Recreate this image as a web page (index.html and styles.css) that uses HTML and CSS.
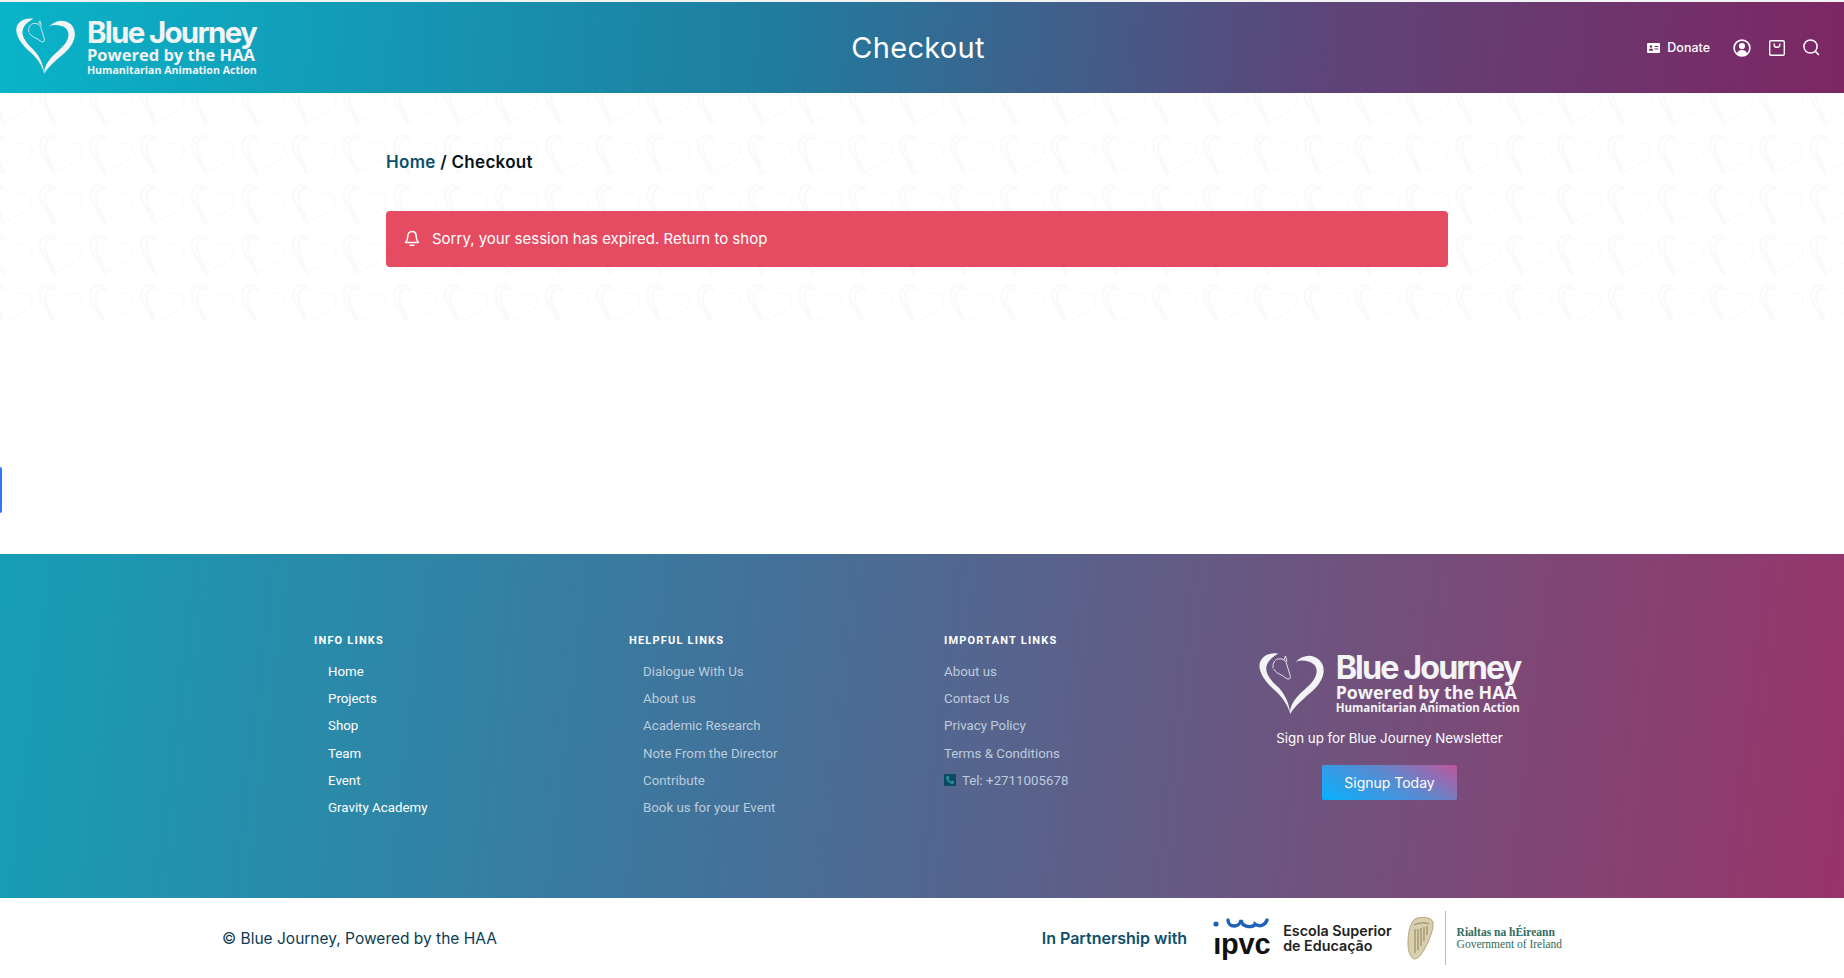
FILE: index.html
```html
<!doctype html>
<html lang="en">
 <head>
  <meta charset="UTF-8">
  <meta name="viewport" content="width=device-width, initial-scale=1.0">
  <title>Checkout - Blue Journey</title>
  <link rel="stylesheet" href="styles.css">
 </head>
 <body>
  <svg class="defs" width="0" height="0" aria-hidden="true">
   <defs>
    <symbol id="heart" viewBox="0 0 177 167">
     <path fill="currentColor" d="M100 24C114 10 135 4 150 10C170 17 179 35 176 55C172 85 145 105 122 125C106 139 93 152 85 167C83 150 92 134 106 118C124 98 152 82 157 55C160 38 149 26 134 23C122 20 110 20 100 24Z"/>
     <path fill="currentColor" d="M52 2C30 -3 5 8 1 30C-2 55 20 82 45 104C62 120 78 140 85 167C82 135 68 108 48 90C28 72 16 52 20 36C24 20 38 10 52 2Z"/>
     <path fill="none" stroke="currentColor" stroke-width="2.4" d="M38 42C36 28 44 16 54 16C62 15 70 18 74 26L85 62Q87 73 77 71L64 62C54 58 44 52 40 44M68 18L72 8L76 24"/>
    </symbol>
    <pattern id="hearts" x="37" y="-10" width="50.6" height="50" patternUnits="userSpaceOnUse">
     <path fill="none" stroke="#f8fafc" stroke-width="2.5" d="M3 12C3 2 14 0 18 6C14 4 8 7 8 14C8 24 16 30 17 40C18 44 14 36 10 28C6 22 3 18 3 12Z"/>
     <path fill="none" stroke="#f9fbfc" stroke-width="1.5" d="M17 40C28 33 46 28 46 18C46 10 36 8 28 12"/>
    </pattern>
   </defs>
  </svg>

  <header class="site-header">
   <a class="logo" href="#">
    <svg class="logo-heart"><use href="#heart"/></svg>
    <span class="logo-text">
     <span class="logo-name">Blue Journey</span>
     <span class="logo-sub">Powered by the HAA</span>
     <span class="logo-small">Humanitarian Animation Action</span>
    </span>
   </a>
   <h1 class="page-title">Checkout</h1>
   <nav class="header-nav">
    <a class="donate" href="#">
     <svg width="13" height="10" viewBox="0 0 13 10">
      <path fill="#fff" fill-rule="evenodd" d="M1 0H12Q13 0 13 1V9Q13 10 12 10H1Q0 10 0 9V1Q0 0 1 0ZM4 2.2A1.3 1.3 0 1 0 4 4.8A1.3 1.3 0 1 0 4 2.2ZM1.8 7.8H6.2C6.2 6.2 5.2 5.4 4 5.4C2.8 5.4 1.8 6.2 1.8 7.8ZM7.5 3V4H11.3V3ZM7.5 5.5V6.5H11.3V5.5Z"/>
     </svg>
     Donate
    </a>
    <a class="nav-icon" href="#">
     <svg width="18" height="18" viewBox="0 0 18 18">
      <circle cx="9" cy="9" r="7.9" fill="none" stroke="#fff" stroke-width="1.6"/>
      <path fill="#fff" d="M9 4A2.9 2.9 0 0 1 9 10.2A2.9 2.9 0 0 1 9 4ZM3.9 14.6C4.6 12 6.6 11 9 11C11.4 11 13.4 12 14.1 14.6C12.8 15.9 11 16.6 9 16.6C7 16.6 5.2 15.9 3.9 14.6Z"/>
     </svg>
    </a>
    <a class="nav-icon" href="#">
     <svg width="16" height="16" viewBox="0 0 16 16" fill="none" stroke="#fff" stroke-width="1.4">
      <rect x="0.7" y="0.7" width="14.6" height="14.6" rx="1.2"/>
      <path d="M5.2 3.5V5.2C5.2 8 10.8 8 10.8 5.2V3.5"/>
     </svg>
    </a>
    <a class="nav-icon" href="#">
     <svg width="17" height="17" viewBox="0 0 17 17" fill="none" stroke="#fff" stroke-width="1.5">
      <circle cx="7.5" cy="7.5" r="6.6"/>
      <path d="M12.4 12.4L16 16"/>
     </svg>
    </a>
   </nav>
  </header>

  <main class="page-main">
   <svg class="main-pattern" aria-hidden="true"><rect width="100%" height="100%" fill="url(#hearts)"/></svg>
   <div class="main-inner">
    <p class="breadcrumb"><a href="#">Home</a> / Checkout</p>
    <div class="alert">
     <svg width="16" height="17" viewBox="0 0 16 17" fill="none" stroke="#fff" stroke-width="1.5">
      <path d="M8 1.5C5.2 1.5 3.8 3.6 3.8 6.2C3.8 9.5 3 11 1.5 12.6H14.5C13 11 12.2 9.5 12.2 6.2C12.2 3.6 10.8 1.5 8 1.5Z" stroke-linejoin="round"/>
      <path d="M6.2 15.2H9.8" stroke-linecap="round"/>
     </svg>
     <span>Sorry, your session has expired. Return to shop</span>
    </div>
   </div>
  </main>
  <a class="side-tab" href="#" aria-label="Open panel"></a>

  <footer class="site-footer">
   <div class="footer-grid">
    <div class="footer-col col-info">
     <h4>Info Links</h4>
     <ul>
      <li><a href="#">Home</a></li>
      <li><a href="#">Projects</a></li>
      <li><a href="#">Shop</a></li>
      <li><a href="#">Team</a></li>
      <li><a href="#">Event</a></li>
      <li><a href="#">Gravity Academy</a></li>
     </ul>
    </div>
    <div class="footer-col col-helpful">
     <h4>Helpful Links</h4>
     <ul>
      <li><a href="#">Dialogue With Us</a></li>
      <li><a href="#">About us</a></li>
      <li><a href="#">Academic Research</a></li>
      <li><a href="#">Note From the Director</a></li>
      <li><a href="#">Contribute</a></li>
      <li><a href="#">Book us for your Event</a></li>
     </ul>
    </div>
    <div class="footer-col col-important">
     <h4>Important Links</h4>
     <ul>
      <li><a href="#">About us</a></li>
      <li><a href="#">Contact Us</a></li>
      <li><a href="#">Privacy Policy</a></li>
      <li><a href="#">Terms &amp; Conditions</a></li>
      <li class="tel">
       <svg width="12" height="12" viewBox="0 0 12 12">
        <rect width="12" height="12" rx="1" fill="#0b4a5e"/>
        <path fill="#2d8fa8" d="M3 2.2L4.6 2L5.4 4L4.5 4.9C5 6.1 5.9 7 7.1 7.5L8 6.6L10 7.4L9.8 9C9.7 9.6 9.2 10 8.6 9.9C5.6 9.5 2.5 6.4 2.1 3.4C2 2.8 2.4 2.3 3 2.2Z"/>
       </svg>
       <a href="#">Tel: +2711005678</a>
      </li>
     </ul>
    </div>
    <div class="footer-signup">
     <a class="logo logo-footer" href="#">
      <svg class="logo-heart"><use href="#heart"/></svg>
      <span class="logo-text">
       <span class="logo-name">Blue Journey</span>
       <span class="logo-sub">Powered by the HAA</span>
       <span class="logo-small">Humanitarian Animation Action</span>
      </span>
     </a>
     <p class="signup-text">Sign up for Blue Journey Newsletter</p>
     <a class="signup-btn" href="#">Signup Today</a>
    </div>
   </div>
  </footer>

  <div class="bottom-bar">
   <p class="copyright">© Blue Journey, Powered by the HAA</p>
   <div class="partners">
    <span class="partner-label">In Partnership with</span>
    <div class="ipvc">
     <svg width="56" height="12" viewBox="0 0 56 12">
      <circle cx="3" cy="6" r="2.6" fill="#1c63b7"/>
      <path fill="none" stroke="#1c63b7" stroke-width="3.4" stroke-linecap="round" d="M15 2C15 10 27 10 28 2C29 10 41 10 42 6C46 9 52 8 54 2"/>
     </svg>
     <span class="ipvc-name">ıpvc</span>
    </div>
    <p class="escola">Escola Superior<br>de Educação</p>
    <svg class="harp" width="27" height="43" viewBox="0 0 27 43">
     <path fill="#d8ceb0" stroke="#b3a679" stroke-width="1" d="M8 2C14 -1 24 0 26 5C27 12 22 24 17 33C14 38 11 42 7 42C3 40 1 34 1 26C1 16 3 6 8 2Z"/>
     <path fill="none" stroke="#8f8253" stroke-width="1" d="M7 8C11 6 18 5 22 7M8 12V36M11 12V33M14 11V29M17 10V24M20 9V18"/>
    </svg>
    <span class="partner-rule"></span>
    <p class="gov"><b>Rialtas na hÉireann</b><br>Government of Ireland</p>
   </div>
  </div>
 </body>
</html>
```

FILE: styles.css
```css
* {
  box-sizing: border-box;
}
html,
body {
  margin: 0;
  background-color: #fff;
}
body {
  font-family: Inter, "Open Sans", sans-serif;
  color: #0b3c52;
  overflow-x: hidden;
}
a {
  color: inherit;
  text-decoration: none;
}
.defs {
  position: absolute;
}

/* header */
.site-header {
  display: grid;
  grid-template-columns: 1fr auto 1fr;
  align-items: center;
  height: 93px;
  padding: 0 24px 0 16px;
  border-top: 2px solid #f0f2f3;
  background: linear-gradient(95deg, #09b4c9 0%, #207c9f 42%, #5e4478 72%, #7d2763 100%);
  color: #fff;
}
.page-title {
  margin: 0;
  font-size: 29px;
  font-weight: 400;
  letter-spacing: 0.3px;
}
.logo {
  display: flex;
  align-items: flex-start;
  gap: 12px;
  color: #f3f4f5;
}
.logo-heart {
  width: 59px;
  height: 56px;
  flex: none;
}
.logo-text {
  display: flex;
  flex-direction: column;
  margin-top: -1px;
  font-family: "Open Sans", sans-serif;
  font-weight: 700;
  white-space: nowrap;
}
.logo-name {
  font-family: Inter, sans-serif;
  font-size: 29.5px;
  line-height: 30px;
  letter-spacing: -1.7px;
}
.logo-sub {
  font-size: 16.5px;
  line-height: 16px;
}
.logo-small {
  font-size: 10.6px;
  line-height: 14px;
}
.header-nav {
  display: flex;
  justify-content: flex-end;
  align-items: center;
  gap: 18px;
}
.donate {
  display: flex;
  align-items: center;
  gap: 7px;
  margin-right: 5px;
  font-size: 12.5px;
  font-weight: 500;
}
.nav-icon {
  display: flex;
}

/* main */
.page-main {
  position: relative;
  height: 461px;
  padding: 0 10px 0 0;
}
.main-pattern {
  position: absolute;
  top: 0;
  left: 0;
  width: 100%;
  height: 227px;
}
.main-inner {
  position: relative;
  width: 1062px;
  margin: 0 auto;
  padding-top: 59px;
}
.breadcrumb {
  margin: 0 0 39px;
  font-size: 17px;
  line-height: 20px;
  font-weight: 600;
  letter-spacing: 0.3px;
  color: #05141b;
}
.breadcrumb a {
  color: #0b4f6c;
}
.alert {
  display: flex;
  align-items: center;
  gap: 12px;
  height: 56px;
  padding: 0 0 2px 18px;
  border-radius: 4px;
  background-color: #e54c62;
  color: #fff;
  font-size: 15px;
}
.side-tab {
  position: absolute;
  left: 0;
  top: 467px;
  width: 2px;
  height: 46px;
  border-radius: 0 2px 2px 0;
  background-color: #2e77f6;
}

/* footer */
.site-footer {
  height: 344px;
  padding: 80px 0 0 314px;
  background: linear-gradient(97deg, #169eb6 0%, #42729a 40%, #70527d 72%, #98346a 100%);
  font-family: Roboto, sans-serif;
}
.footer-grid {
  display: grid;
  grid-template-columns: 315px 315px 315px 261px;
}
.footer-col h4 {
  margin: 0 0 14px;
  font-size: 11px;
  line-height: 14px;
  font-weight: 700;
  letter-spacing: 1.2px;
  text-transform: uppercase;
  color: #fff;
}
.footer-col ul {
  margin: 0;
  padding: 0;
  list-style: none;
}
.footer-col li {
  height: 27.2px;
  font-size: 13.3px;
  line-height: 20px;
  color: #bccbdc;
}
.col-info li {
  padding-left: 14px;
  color: #fff;
}
.col-helpful li {
  padding-left: 14px;
}
.tel {
  display: flex;
  gap: 6px;
}
.tel svg {
  margin-top: 3px;
}
.footer-signup {
  display: flex;
  flex-direction: column;
  align-items: center;
  padding-top: 19px;
}
.logo-footer .logo-heart {
  width: 65px;
  height: 61px;
}
.logo-footer {
  gap: 12px;
  margin-bottom: 14px;
}
.logo-footer .logo-name {
  font-size: 32.3px;
  line-height: 31px;
  letter-spacing: -1.9px;
}
.logo-footer .logo-sub {
  font-size: 17.8px;
  line-height: 18px;
}
.logo-footer .logo-small {
  font-size: 11.5px;
  line-height: 13px;
}
.signup-text {
  margin: 0 0 17px;
  font-family: Inter, sans-serif;
  font-size: 13.3px;
  line-height: 20px;
  color: #fff;
}
.signup-btn {
  display: block;
  width: 135px;
  height: 35px;
  border-radius: 2px;
  background: linear-gradient(30deg, #06b1ff 0%, #5a8ad0 55%, #c0559b 100%);
  color: #fff;
  font-family: Inter, sans-serif;
  font-size: 14px;
  line-height: 35px;
  text-align: center;
}

/* bottom bar */
.bottom-bar {
  display: flex;
  justify-content: space-between;
  align-items: center;
  height: 80px;
  padding: 0 282px 0 222px;
}
.copyright {
  margin: 0;
  font-size: 15.5px;
  color: #0b3c52;
}
.partners {
  display: flex;
  align-items: center;
}
.partner-label {
  margin-right: 26px;
  font-size: 16px;
  font-weight: 600;
  color: #0b4f6c;
}
.ipvc {
  display: flex;
  flex-direction: column;
  width: 56px;
  margin-right: 14px;
}
.ipvc-name {
  font-family: "Liberation Sans", sans-serif;
  font-weight: 700;
  font-size: 29px;
  line-height: 28px;
  letter-spacing: -0.2px;
  color: #111;
}
.escola {
  margin: 0 15px 0 0;
  font-family: Inter, sans-serif;
  font-weight: 600;
  font-size: 14.3px;
  line-height: 15px;
  color: #222;
}
.harp {
  flex: none;
}
.partner-rule {
  width: 1px;
  height: 54px;
  margin: 0 11px;
  background-color: #a9c2bb;
}
.gov {
  margin: 0;
  font-family: "Liberation Serif", serif;
  font-size: 11.5px;
  line-height: 12px;
  color: #2f6b5e;
  white-space: nowrap;
}
```
